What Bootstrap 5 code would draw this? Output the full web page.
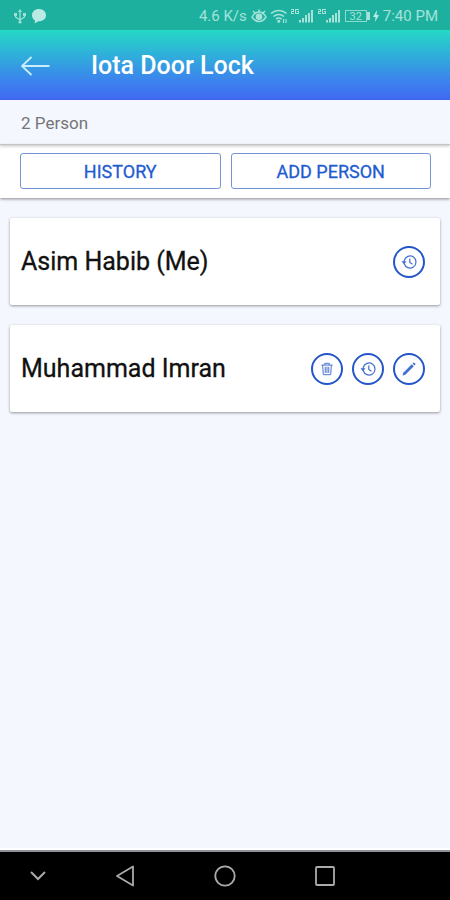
<!DOCTYPE html>
<html lang="en">
<head>
<meta charset="utf-8">
<meta name="viewport" content="width=device-width, initial-scale=1">
<title>Iota Door Lock</title>
<link href="https://cdn.jsdelivr.net/npm/bootstrap@5.3.0/dist/css/bootstrap.min.css" rel="stylesheet">
<style>
body { font-family: Roboto, "Liberation Sans", sans-serif; background: #f4f7fe; color: #111; }
svg { display: block; flex: none; }
.statusbar { background: #1eb09e; color: #a5e3da; height: 30px; font-size: 15px; line-height: 20px; padding: 2px 12px 0 13px; }
.status-icons { gap: 3px; margin: 0 4px; }
.battery-level { font-size: 11px; line-height: 11px; border: 1px solid #8fd9ce; width: 22px; height: 12px; }
.battery-tip { width: 3px; height: 8px; background: #a5e3da; }
.appbar { height: 70px; padding: 2px 21px 0; gap: 40px; background: linear-gradient(#25d9c5, #2fb0da 35%, #3b86ec 70%, #4169f3); color: #fff; }
.appbar h1 { font-size: 25px; line-height: 32px; font-weight: 500; }
.count-strip { height: 45px; padding: 2px 21px 0; font-size: 17px; line-height: 24px; color: #757575; border-bottom: 1px solid #c2c4c8; box-shadow: 0 1px 3px rgba(0,0,0,.25); z-index: 1; }
.actions { padding: 8px 19px 9px 20px; gap: 10px; box-shadow: 0 1px 3px rgba(0,0,0,.45); }
.actions .btn { --bs-btn-color: #1f5bd0; --bs-btn-border-color: #7394d6; --bs-btn-padding-y: 0; --bs-btn-font-size: 17px; --bs-btn-line-height: 24px; --bs-btn-border-radius: 3px; height: 36px; padding-top: 1px; -webkit-text-stroke: .3px #1f5bd0; font-size: 18px; }
.people { padding: 20px 10px; gap: 20px; }
.person { height: 87px; padding: 0 15px 0 11px; border-radius: 2px; box-shadow: 0 1px 3px rgba(0,0,0,.4); }
.person h2 { font-size: 25px; line-height: 32px; font-weight: 400; -webkit-text-stroke: .3px #111; }
.person-tools { gap: 9px; }
.round-btn { width: 32px; height: 32px; border: 2px solid #2456c8; color: #2456c8; }
.round-btn svg { opacity: .85; }
.navbar-soft { height: 50px; border-top: 2px solid #8f9298; background: #000; box-shadow: 0 -2px 1px #fff; }
.navbar-soft .btn { padding: 0; border: 0; width: 100px; }
.navbar-soft .btn:first-child { width: 75px; }
</style>
</head>
<body>
<div class="d-flex flex-column min-vh-100">
  <div class="statusbar d-flex align-items-center">
    <svg width="14" height="18" viewBox="0 0 14 18" fill="none" stroke="#9de1d7" stroke-width="1.3"><path d="M7 4v11M2.500 7v3L7 13l4.500-3V7"/><path d="M7 2 9 5H5z" fill="#9de1d7" stroke="none"/><circle cx="7" cy="15" r="1.600" fill="#9de1d7" stroke="none"/><path d="M1 6h3v3H1zM10 6h3v3h-3z" fill="#9de1d7" stroke="none"/></svg>
    <svg class="ms-1" width="16" height="16" viewBox="0 0 16 16" fill="#b9ebe4"><path d="M8 1C4 1 1 3.700 1 7.200c0 2.200 1.100 4 3 5.100L3.600 15.300l4-2H8c4 0 7-2.700 7-6.100S12 1 8 1z"/></svg>
    <span class="ms-auto">4.6 K/s</span>
    <div class="status-icons d-flex align-items-center">
      <svg width="16" height="16" viewBox="0 0 16 16" fill="none" stroke="#a5e3da" stroke-width="1.500"><path d="M1 9c2-3.500 4-5 7-5s5 1.500 7 5c-2 3-4 4.500-7 4.500S3 12 1 9zM2 3l2 2M14 3l-2 2M8 1.500V4"/><circle cx="8" cy="8.700" r="2.500" fill="#a5e3da"/></svg>
      <svg width="18" height="16" viewBox="0 0 18 16" fill="none" stroke="#a5e3da" stroke-width="1.600"><path d="M1 5.500c4.500-4 11-4 15.500 0M3.500 8.500c3-2.600 7.500-2.600 10.500 0M6 11.200c1.600-1.400 4-1.400 5.600 0"/><circle cx="8.800" cy="13.300" r="1.500" fill="#a5e3da" stroke="none"/><path d="M13.500 11v4M16 11v4" stroke-width="1.200"/></svg>
      <svg width="24" height="16" viewBox="0 0 24 16" fill="#a5e3da"><path d="M0 1h3v3H1v1h2v1H0V3h2V2H0zM4 1h4v1H5v3h2V4H6V3h2v3H4zM8 12h2v2.500H8zM11 10h2v4.500h-2zM14 7h2v7.500h-2zM17 5h2v9.500h-2zM20 2h2v12.500h-2z"/></svg>
      <svg width="24" height="16" viewBox="0 0 24 16" fill="#a5e3da"><path d="M0 1h3v3H1v1h2v1H0V3h2V2H0zM4 1h4v1H5v3h2V4H6V3h2v3H4zM8 12h2v2.500H8zM11 10h2v4.500h-2zM14 7h2v7.500h-2zM17 5h2v9.500h-2zM20 2h2v12.500h-2z"/></svg>
      <div class="d-flex align-items-center"><span class="battery-level d-flex align-items-center justify-content-center">32</span><span class="battery-tip"></span></div>
      <svg width="6" height="12" viewBox="0 0 6 12" fill="#b9ebe4"><path d="M4 0 0 7h2.500L2 12l4-7H3.500z"/></svg>
    </div>
    <span>7:40 PM</span>
  </div>

  <header class="appbar d-flex align-items-center">
    <a href="#" aria-label="Back"><svg width="30" height="20" viewBox="0 0 30 20" fill="none" stroke="#c8eefb" stroke-width="1.800"><path d="M28.500 10H1M10.500 1 1 10l9.500 9"/></svg></a>
    <h1 class="m-0">Iota Door Lock</h1>
  </header>

  <div class="count-strip d-flex align-items-center position-relative">2 Person</div>

  <div class="actions d-flex bg-white">
    <button class="btn btn-outline-primary flex-fill w-50" type="button">HISTORY</button>
    <button class="btn btn-outline-primary flex-fill w-50" type="button">ADD PERSON</button>
  </div>

  <main class="people d-flex flex-column flex-grow-1">
    <section class="person bg-white d-flex align-items-center justify-content-between">
      <h2 class="m-0">Asim Habib (Me)</h2>
      <button class="round-btn rounded-circle bg-transparent p-0 d-flex align-items-center justify-content-center" type="button" aria-label="History of Asim Habib"><svg width="16" height="16" viewBox="0 0 16 16" fill="none" stroke="currentColor" stroke-width="1.200"><path d="M3.200 9.500A6 6 0 1 0 3.200 6.500V8.500M8.800 4.500v4l2.700 1.700"/><path d="M.5 7.200h5L3 10.500z" fill="currentColor" stroke="none"/></svg></button>
    </section>
    <section class="person bg-white d-flex align-items-center justify-content-between">
      <h2 class="m-0">Muhammad Imran</h2>
      <div class="person-tools d-flex">
        <button class="round-btn rounded-circle bg-transparent p-0 d-flex align-items-center justify-content-center" type="button" aria-label="Delete Muhammad Imran"><svg width="14" height="14" viewBox="0 0 14 16" fill="none" stroke="currentColor" stroke-width="1.100"><path d="M.5 3.500h13M4.500 3.500V1.500h5v2M2 3.500l.8 11h8.400l.8-11M5 5.500v7M7 5.500v7M9 5.500v7"/></svg></button>
        <button class="round-btn rounded-circle bg-transparent p-0 d-flex align-items-center justify-content-center" type="button" aria-label="History of Muhammad Imran"><svg width="16" height="16" viewBox="0 0 16 16" fill="none" stroke="currentColor" stroke-width="1.200"><path d="M3.200 9.500A6 6 0 1 0 3.200 6.500V8.500M8.800 4.500v4l2.700 1.700"/><path d="M.5 7.200h5L3 10.500z" fill="currentColor" stroke="none"/></svg></button>
        <button class="round-btn rounded-circle bg-transparent p-0 d-flex align-items-center justify-content-center" type="button" aria-label="Edit Muhammad Imran"><svg width="14" height="14" viewBox="0 0 14 14" fill="currentColor"><path d="M.5 13.500 1.300 10.700l8.500-8.500 2 2-8.500 8.500zM10.500 1.500l.8-.8q.5-.4 1 0l1 1q.4.500 0 1l-.8.800z"/></svg></button>
      </div>
    </section>
  </main>

  <nav class="navbar-soft d-flex align-items-center" aria-label="System">
    <button class="btn d-flex justify-content-center" type="button" aria-label="Hide"><svg width="16" height="10" viewBox="0 0 16 10" fill="none" stroke="#aaa" stroke-width="2"><path d="m1 1 7 7 7-7"/></svg></button>
    <button class="btn d-flex justify-content-center" type="button" aria-label="Back"><svg width="20" height="22" viewBox="0 0 20 22" fill="none" stroke="#aaa" stroke-width="1.800" stroke-linejoin="round"><path d="M18 1.500v19L2 11z"/></svg></button>
    <button class="btn d-flex justify-content-center" type="button" aria-label="Home"><svg width="22" height="22" viewBox="0 0 22 22" fill="none" stroke="#aaa" stroke-width="1.800"><circle cx="11" cy="11" r="9.700"/></svg></button>
    <button class="btn d-flex justify-content-center" type="button" aria-label="Recent apps"><svg width="20" height="20" viewBox="0 0 20 20" fill="none" stroke="#aaa" stroke-width="1.800"><rect x="1" y="1" width="18" height="18" rx="1"/></svg></button>
  </nav>
</div>
<script src="https://cdn.jsdelivr.net/npm/bootstrap@5.3.0/dist/js/bootstrap.bundle.min.js"></script>
</body>
</html>
